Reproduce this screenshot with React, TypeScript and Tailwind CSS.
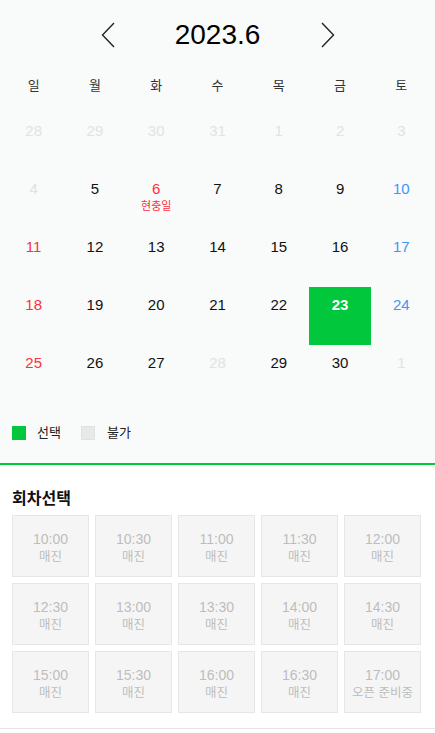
const weekdays = ["일", "월", "화", "수", "목", "금", "토"];

type Day = { n: number; muted?: boolean; holiday?: string; selected?: boolean };

const weeks: Day[][] = [
  [28, 29, 30, 31, 1, 2, 3].map((n) => ({ n, muted: true })),
  [
    { n: 4, muted: true },
    { n: 5 },
    { n: 6, holiday: "현충일" },
    { n: 7 },
    { n: 8 },
    { n: 9 },
    { n: 10 },
  ],
  [11, 12, 13, 14, 15, 16, 17].map((n) => ({ n })),
  [
    { n: 18 },
    { n: 19 },
    { n: 20 },
    { n: 21 },
    { n: 22 },
    { n: 23, selected: true },
    { n: 24 },
  ],
  [
    { n: 25 },
    { n: 26 },
    { n: 27 },
    { n: 28, muted: true },
    { n: 29 },
    { n: 30 },
    { n: 1, muted: true },
  ],
];

const times = [
  "10:00", "10:30", "11:00", "11:30", "12:00",
  "12:30", "13:00", "13:30", "14:00", "14:30",
  "15:00", "15:30", "16:00", "16:30", "17:00",
];

function dayColor(d: Day, col: number) {
  if (d.selected) return "text-white font-bold";
  if (d.muted) return "text-[#e2e2e2]";
  if (d.holiday || col === 0) return "text-[#ff2f3e]";
  if (col === 6) return "text-[#3d97f5]";
  return "text-[#111]";
}

export default function App() {
  return (
    <div className="w-[435px] h-[733px] bg-white font-['Liberation_Sans','Noto_Sans_CJK_KR',sans-serif]">
      <section className="bg-[#f9fafa] border-b-2 border-[#00c73c]">
        <div className="flex items-center justify-center h-[68px] pt-[2px]">
          <button className="w-[20px] h-[28px] flex items-center justify-center">
            <svg width="14" height="26" viewBox="0 0 14 26" fill="none" stroke="#222" strokeWidth="1.4">
              <path d="M13 1 L1.5 13 L13 25" />
            </svg>
          </button>
          <h1 className="w-[200px] text-center text-[28px] leading-none text-black">2023.6</h1>
          <button className="w-[20px] h-[28px] flex items-center justify-center">
            <svg width="14" height="26" viewBox="0 0 14 26" fill="none" stroke="#222" strokeWidth="1.4">
              <path d="M1 1 L12.5 13 L1 25" />
            </svg>
          </button>
        </div>

        <div className="px-[3px]">
          <div className="grid grid-cols-7 h-[36px] items-center text-[13px] text-[#333]">
            {weekdays.map((w) => (
              <div key={w} className="text-center">{w}</div>
            ))}
          </div>
          <div className="pt-[9px]">
            {weeks.map((week, i) => (
              <div key={i} className="grid grid-cols-7">
                {week.map((d, j) => (
                  <div
                    key={j}
                    className={`h-[58px] flex flex-col items-center pt-[8px] text-[15px] ${dayColor(d, j)} ${d.selected ? "bg-[#00c73c]" : ""}`}
                  >
                    <span className="leading-[20px]">{d.n}</span>
                    {d.holiday && (
                      <span className="text-[11px] leading-[14px] text-[#ff2f3e]">{d.holiday}</span>
                    )}
                  </div>
                ))}
              </div>
            ))}
          </div>
        </div>

        <div className="flex items-center px-[12px] pt-[20px] pb-[20px] text-[13px] text-[#222]">
          <span className="w-[14px] h-[14px] bg-[#00c73c] mr-[11px]" />
          <span className="mr-[20px]">선택</span>
          <span className="w-[14px] h-[14px] bg-[#e8e8e8] border border-[#e0e0e0] mr-[12px]" />
          <span>불가</span>
        </div>
      </section>

      <section className="px-[12px] pt-[24px] pb-[15px] border-b border-[#e5e5e5]">
        <h2 className="text-[16px] font-bold text-[#111] leading-[20px] mb-[6px]">회차선택</h2>
        <div className="grid grid-cols-5 gap-[6px] w-[409px]">
          {times.map((t) => (
            <div
              key={t}
              className="h-[62px] pt-[3px] bg-[#f5f5f5] border border-[#e6e6e6] flex flex-col items-center justify-center text-[#bdbdbd]"
            >
              <span className="text-[14px] leading-[20px]">{t}</span>
              <span className="text-[12.5px] leading-[17px]">{t === "17:00" ? "오픈 준비중" : "매진"}</span>
            </div>
          ))}
        </div>
      </section>
    </div>
  );
}
